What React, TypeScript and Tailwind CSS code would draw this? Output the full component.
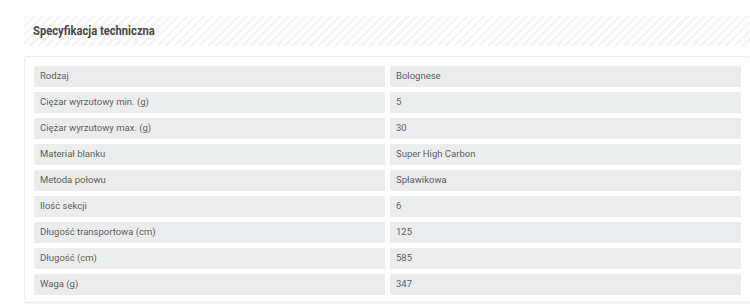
const specs: [string, string][] = [
  ["Rodzaj", "Bolognese"],
  ["Ciężar wyrzutowy min. (g)", "5"],
  ["Ciężar wyrzutowy max. (g)", "30"],
  ["Materiał blanku", "Super High Carbon"],
  ["Metoda połowu", "Spławikowa"],
  ["Ilość sekcji", "6"],
  ["Długość transportowa (cm)", "125"],
  ["Długość (cm)", "585"],
  ["Waga (g)", "347"],
];

function SpecRow({ label, value, odd }: { label: string; value: string; odd: boolean }) {
  const bg = odd ? "bg-[#eceeee]" : "bg-[#ebeced]";
  return (
    <div className="grid grid-cols-2 gap-[5px]">
      <div className={`${bg} h-[21px] flex items-center pl-[6px] text-[9.5px] text-[#5e5e5e]`}>{label}</div>
      <div className={`${bg} h-[21px] flex items-center pl-[6px] text-[9.5px] text-[#5e5e5e]`}>{value}</div>
    </div>
  );
}

export default function App() {
  return (
    <div className="w-[750px] h-[304px] overflow-hidden bg-white font-['Roboto',sans-serif]">
      <div className="w-[740px] ml-[24px] pt-[16px]">
        {/* section header with hatched background */}
        <div className="h-[30px] flex items-center pl-[9px] bg-[repeating-linear-gradient(135deg,#f6f6f6_0,#f6f6f6_3px,#ffffff_3px,#ffffff_6px)]">
          <h2 className="inline-block origin-left scale-x-[0.86] text-[13px] font-bold text-[#484848] whitespace-nowrap">
            Specyfikacja techniczna
          </h2>
        </div>

        <div className="mt-[10px] w-[727px] border border-[#ececec] rounded-[3px] shadow-[0_1px_2px_rgba(0,0,0,0.04)] pt-[9px] pb-[7px] px-[9px]">
          <div className="flex flex-col gap-[5px]">
            {specs.map(([label, value], i) => (
              <SpecRow key={label} label={label} value={value} odd={i % 2 === 1} />
            ))}
          </div>
        </div>
      </div>
    </div>
  );
}
